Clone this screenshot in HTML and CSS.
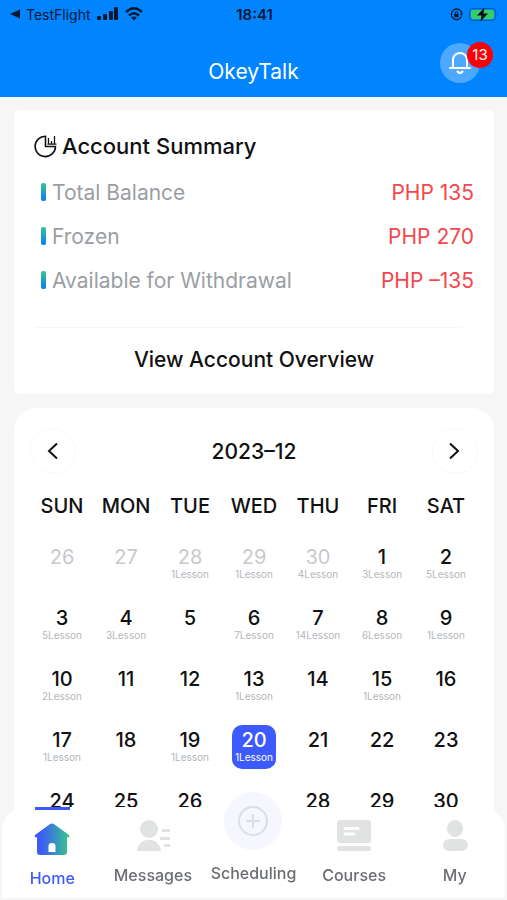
FILE: index.html
```
<!DOCTYPE html>
<html lang="en">

<head>
    <meta charset="UTF-8">
    <meta name="viewport" content="width=device-width, initial-scale=1.0">
    <title>OkeyTalk</title>
    <link rel="stylesheet" href="styles.css">
</head>

<body>
    <header class="header">
        <div class="status-bar">
            <div class="status-left">
                <svg width="10" height="10" viewBox="0 0 10 10"><path d="M0 5L10 0.500V9.500Z" /></svg>
                <span class="carrier">TestFlight</span>
                <svg width="22" height="14" viewBox="0 0 22 14">
                    <rect x="0" y="9" width="4" height="4" rx="1" />
                    <rect x="6" y="7" width="4" height="6" rx="1" />
                    <rect x="12" y="4" width="4" height="9" rx="1" />
                    <rect x="17" y="0" width="4" height="13" rx="1" />
                </svg>
                <svg width="18" height="14" viewBox="0 0 18 14" fill="none" stroke="#001a33" stroke-width="2.4">
                    <path d="M1 5Q9-2.500 17 5" />
                    <path d="M4 8.500Q9 4 14 8.500" />
                    <path d="M6 10.500Q9 8.500 12 10.500L9 13.500Z" fill="#001a33" stroke="none" />
                </svg>
            </div>
            <span class="clock">18:41</span>
            <div class="status-right">
                <svg width="13" height="13" viewBox="0 0 13 13" fill="none" stroke="#001a33">
                    <path d="M11.800 5A5.300 5.300 0 1 0 11.500 8.500" stroke-width="1.300" />
                    <path d="M10 5.500H13L11.500 8Z" fill="#001a33" stroke="none" />
                    <rect x="4.300" y="6" width="4.400" height="3.200" fill="#001a33" stroke="none" />
                    <path d="M5.200 6V5a1.300 1.300 0 0 1 2.600 0v1" />
                </svg>
                <svg width="30" height="15" viewBox="0 0 30 15">
                    <rect x="0.500" y="1.500" width="26" height="12" rx="3.500" fill="none" stroke="#0a58b0" />
                    <rect x="2" y="3" width="23" height="9" rx="2" fill="#35cf68" />
                    <path d="M28 5.500q2 2 0 4z" fill="#0a58b0" />
                    <path d="M15.500 0.500L8 8.500H12.500L11.500 14.500L19 6.500H14.500Z" fill="#000c18" />
                </svg>
            </div>
        </div>
        <div class="title-bar">
            <h1>OkeyTalk</h1>
            <button class="bell" aria-label="Notifications">
                <svg width="22" height="24" viewBox="0 0 22 24" fill="none" stroke="#fff" stroke-width="2" stroke-linecap="round">
                    <path d="M1 17H21" />
                    <path d="M4 17V9A7 7 0 0 1 18 9V17" />
                    <path d="M8.500 20.500Q11 23.500 13.500 20.500" />
                </svg>
                <span class="badge">13</span>
            </button>
        </div>
    </header>

    <main class="content">
        <section class="card summary">
            <h2>
                <svg width="24" height="24" viewBox="0 0 24 24" fill="none" stroke="#111" stroke-width="1.600">
                    <path d="M11.500 2.200A10.200 10.200 0 1 0 21.500 12.500H11.500Z" stroke-linejoin="round" />
                    <path d="M14.500 10.500V4M17.500 10.500V7M20.500 10.500V2M13.500 10.200H22.500" stroke-width="1.300" />
                </svg>
                Account Summary
            </h2>
            <dl>
                <div class="row"><dt>Total Balance</dt><dd>PHP 135</dd></div>
                <div class="row"><dt>Frozen</dt><dd>PHP 270</dd></div>
                <div class="row"><dt>Available for Withdrawal</dt><dd>PHP –135</dd></div>
            </dl>
            <a class="overview" href="#overview">View Account Overview</a>
        </section>

        <section class="card calendar">
            <div class="month-bar">
                <button class="arrow" aria-label="Previous month">
                    <svg width="12" height="18" viewBox="0 0 12 18"><path d="M10 1.500L2 9L10 16.500" /></svg>
                </button>
                <h2>2023–12</h2>
                <button class="arrow" aria-label="Next month">
                    <svg width="12" height="18" viewBox="0 0 12 18"><path d="M1 1.500L9 9L1 16.500" /></svg>
                </button>
            </div>
            <table>
                <thead>
                    <tr><th>SUN</th><th>MON</th><th>TUE</th><th>WED</th><th>THU</th><th>FRI</th><th>SAT</th></tr>
                </thead>
                <tbody>
                    <tr>
                        <td><button class="day other">26</button></td>
                        <td><button class="day other">27</button></td>
                        <td><button class="day other">28<small>1Lesson</small></button></td>
                        <td><button class="day other">29<small>1Lesson</small></button></td>
                        <td><button class="day other">30<small>4Lesson</small></button></td>
                        <td><button class="day">1<small>3Lesson</small></button></td>
                        <td><button class="day">2<small>5Lesson</small></button></td>
                    </tr>
                    <tr>
                        <td><button class="day">3<small>5Lesson</small></button></td>
                        <td><button class="day">4<small>3Lesson</small></button></td>
                        <td><button class="day">5</button></td>
                        <td><button class="day">6<small>7Lesson</small></button></td>
                        <td><button class="day">7<small>14Lesson</small></button></td>
                        <td><button class="day">8<small>6Lesson</small></button></td>
                        <td><button class="day">9<small>1Lesson</small></button></td>
                    </tr>
                    <tr>
                        <td><button class="day">10<small>2Lesson</small></button></td>
                        <td><button class="day">11</button></td>
                        <td><button class="day">12</button></td>
                        <td><button class="day">13<small>1Lesson</small></button></td>
                        <td><button class="day">14</button></td>
                        <td><button class="day">15<small>1Lesson</small></button></td>
                        <td><button class="day">16</button></td>
                    </tr>
                    <tr>
                        <td><button class="day">17<small>1Lesson</small></button></td>
                        <td><button class="day">18</button></td>
                        <td><button class="day">19<small>1Lesson</small></button></td>
                        <td><button class="day selected">20<small>1Lesson</small></button></td>
                        <td><button class="day">21</button></td>
                        <td><button class="day">22</button></td>
                        <td><button class="day">23</button></td>
                    </tr>
                    <tr>
                        <td><button class="day">24</button></td>
                        <td><button class="day">25</button></td>
                        <td><button class="day">26</button></td>
                        <td><button class="day">27</button></td>
                        <td><button class="day">28</button></td>
                        <td><button class="day">29</button></td>
                        <td><button class="day">30</button></td>
                    </tr>
                </tbody>
            </table>
        </section>
    </main>

    <nav class="tab-bar">
        <a class="tab active" href="#home">
            <svg width="36" height="32" viewBox="0 0 36 32">
                <defs>
                    <linearGradient id="home-fill">
                        <stop offset="0.200" stop-color="#3d5cf5" />
                        <stop offset="1" stop-color="#35c98a" />
                    </linearGradient>
                </defs>
                <path fill="url(#home-fill)" fill-rule="evenodd" d="M16.500 0.800Q18 0 19.500 0.800L35 12Q36 14 34 14.500L33 14V29Q33 32 30 32H6Q3 32 3 29V14L2 14.500Q0 14 1 12ZM14.500 29H21.500V23Q21.500 20 18 20Q14.500 20 14.500 23Z" />
            </svg>
            Home
        </a>
        <a class="tab" href="#messages">
            <svg width="36" height="32" viewBox="0 0 36 32" fill="#e1e3e3">
                <circle cx="14" cy="9" r="9" />
                <path d="M2 31C3 16 25 16 26 31Z" />
                <path d="M27 9H35V12H27ZM25 17H35V20H25ZM29 24H35V27H29Z" />
            </svg>
            Messages
        </a>
        <a class="tab scheduling" href="#scheduling">
            <span class="plus">
                <svg width="32" height="32" viewBox="0 0 32 32" fill="none" stroke="#dcdde8" stroke-width="2">
                    <circle cx="16" cy="16" r="14" />
                    <path d="M9 16H23M16 9V23" />
                </svg>
            </span>
            Scheduling
        </a>
        <a class="tab" href="#courses">
            <svg width="36" height="32" viewBox="0 0 36 32">
                <rect x="1" y="0" width="34" height="23" rx="3" fill="#e1e3e3" />
                <rect x="1" y="26" width="34" height="5" rx="2" fill="#e1e3e3" />
                <path d="M9 8.500H22M9 14H18" stroke="#fff" stroke-width="3" stroke-linecap="round" />
            </svg>
            Courses
        </a>
        <a class="tab" href="#my">
            <svg width="36" height="32" viewBox="0 0 36 32" fill="#e1e3e3">
                <ellipse cx="18" cy="8.500" rx="8" ry="8.500" />
                <rect x="6" y="19" width="25" height="12" rx="6" />
            </svg>
            My
        </a>
    </nav>
</body>

</html>
```
FILE: styles.css
```
* {
    margin: 0;
    padding: 0;
    box-sizing: border-box;
}

body {
    font-family: Inter, "Liberation Sans", sans-serif;
    background: #f6f6f6;
    color: #111;
    height: 100vh;
    display: flex;
    flex-direction: column;
    overflow: hidden;
}

button {
    font: inherit;
    color: inherit;
    background: none;
    border: none;
    cursor: pointer;
}

a {
    color: inherit;
    text-decoration: none;
}

/* Header */
.header {
    background: #0084ff;
    flex: none;
}

.status-bar {
    display: grid;
    grid-template-columns: 1fr auto 1fr;
    align-items: center;
    height: 28px;
    padding: 0 8px 0 10px;
    color: #001a33;
    fill: #001a33;
}

.status-left,
.status-right {
    display: flex;
    align-items: center;
    gap: 6px;
}

.status-right {
    justify-content: flex-end;
}

.carrier {
    font-size: 14px;
}

.clock {
    font-size: 15px;
    font-weight: 600;
}

.title-bar {
    display: grid;
    grid-template-columns: 1fr auto 1fr;
    align-items: center;
    height: 69px;
    padding: 0 27px;
}

.title-bar h1 {
    grid-column: 2;
    padding-top: 18px;
    font-size: 21px;
    font-weight: 400;
    line-height: 24px;
    color: #fff;
}

.bell {
    position: relative;
    justify-self: end;
    display: flex;
    align-items: center;
    justify-content: center;
    width: 40px;
    height: 40px;
    border-radius: 50%;
    background: #4da9ff;
}

.badge {
    position: absolute;
    top: -1px;
    right: -13px;
    width: 26px;
    height: 26px;
    border-radius: 50%;
    background: #fd0006;
    color: #fff;
    font-size: 15px;
    line-height: 26px;
}

/* Cards */
.content {
    flex: 1;
    display: flex;
    flex-direction: column;
    gap: 14px;
    padding: 13px 13px 100px 14px;
    overflow-y: auto;
    scrollbar-width: none;
}

.card {
    flex: none;
    background: #fff;
}

.summary {
    padding: 24px 20px 22px;
    border-radius: 6px;
}

.summary h2 {
    display: flex;
    align-items: center;
    gap: 4px;
    font-size: 22px;
    font-weight: 500;
    line-height: 24px;
    margin-bottom: 12px;
}

.row {
    display: flex;
    align-items: center;
    height: 44px;
    font-size: 21px;
}

.row dt {
    display: flex;
    align-items: center;
    gap: 6px;
    margin-left: 7px;
    color: #9a9ea3;
}

.row dt::before {
    content: "";
    width: 5px;
    height: 18px;
    border-radius: 2px;
    background: linear-gradient(#35c98a, #0a78ff);
}

.row dd {
    margin-left: auto;
    color: #f5474c;
}

.overview {
    display: block;
    margin: 25px 12px 0 2px;
    padding: 20px 0 0 10px;
    border-top: 1px solid #f6f6f6;
    font-size: 21px;
    font-weight: 500;
    line-height: 24px;
    text-align: center;
}

/* Calendar */
.calendar {
    padding: 20px 16px;
    border-radius: 22px;
}

.month-bar {
    display: flex;
    align-items: center;
    justify-content: space-between;
}

.month-bar h2 {
    font-size: 21px;
    font-weight: 500;
}

.arrow {
    display: flex;
    align-items: center;
    justify-content: center;
    width: 46px;
    height: 46px;
    border: 1px solid #f8f8f8;
    border-radius: 50%;
}

.arrow svg {
    fill: none;
    stroke: #111;
    stroke-width: 2;
}

table {
    width: 100%;
    margin-top: 20px;
    table-layout: fixed;
    border-collapse: collapse;
}

th {
    height: 24px;
    font-size: 20px;
    font-weight: 500;
    line-height: 24px;
}

td {
    padding-top: 17px;
}

tbody tr:first-child td {
    padding-top: 24px;
}

.day {
    display: flex;
    flex-direction: column;
    align-items: center;
    width: 44px;
    height: 44px;
    margin: 0 auto;
    padding-top: 3px;
    border-radius: 10px;
    font-size: 20px;
    font-weight: 500;
    line-height: 24px;
}

.day small {
    font-size: 10px;
    font-weight: 400;
    line-height: 10px;
    color: #b4b7ba;
}

.day.other {
    color: #c8c9cb;
    font-weight: 400;
}

.day.selected {
    background: #3d5afe;
    color: #fff;
}

.day.selected small {
    color: #fff;
}

/* Tab bar */
.tab-bar {
    position: fixed;
    left: 2px;
    right: 2px;
    bottom: 2px;
    display: grid;
    grid-template-columns: repeat(5, 1fr);
    height: 91px;
    border-radius: 24px 24px 0 0;
    background: #fff;
}

.tab {
    display: flex;
    flex-direction: column;
    align-items: center;
    gap: 13px;
    padding-top: 13px;
    font-size: 16px;
    font-weight: 500;
    line-height: 20px;
    color: #6b6e72;
}

.tab.active {
    color: #3d5afe;
}

.tab.active::before {
    content: "";
    width: 35px;
    height: 3px;
    margin-top: -13px;
    background: #3d5afe;
}

.plus {
    display: flex;
    align-items: center;
    justify-content: center;
    width: 58px;
    height: 58px;
    margin-top: -28px;
    border-radius: 50%;
    background: #f5f6ff;
    box-shadow: 0 0 0 2px #fff;
}
```
